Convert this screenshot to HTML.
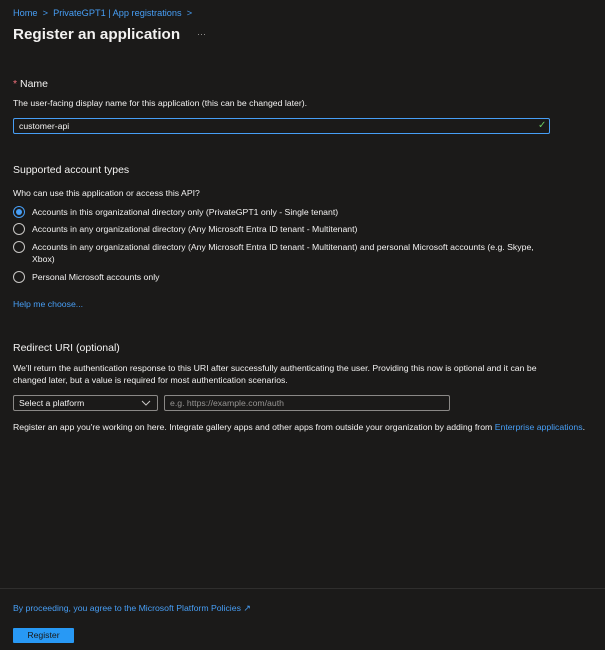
<!DOCTYPE html>
<html><head><meta charset="utf-8"><style>
*{margin:0;padding:0;box-sizing:border-box}
body{width:605px;height:650px;background:#1b1a19;color:#f3f2f1;font-family:"Liberation Sans",sans-serif;font-size:8.7px;position:relative;overflow:hidden}
.a{position:absolute;white-space:nowrap}
.link{color:#479ef5}
.radio{position:absolute;left:13px;width:12px;height:12px;border:1px solid #c8c6c4;border-radius:50%}
.radio.on{border-color:#479ef5}
.radio.on:after{content:"";position:absolute;left:2px;top:2px;width:6px;height:6px;border-radius:50%;background:#479ef5}
.box{position:absolute;border:1px solid #8a8886;border-radius:2px}
</style></head><body>
<div class="a link" style="left:13px;top:8px;font-size:9.2px">Home &nbsp;&gt;&nbsp; PrivateGPT1 | App registrations &nbsp;&gt;</div>
<div class="a" style="left:13px;top:26px;font-size:15.2px;font-weight:bold">Register an application</div>
<div class="a" style="left:197px;top:29px;color:#a19f9d;font-size:9px">···</div>
<div class="a" style="left:13px;top:78px;font-size:10.5px"><span style="color:#f1707b">*</span> Name</div>
<div class="a" style="left:13px;top:98px">The user-facing display name for this application (this can be changed later).</div>
<div class="box" style="left:13px;top:118px;width:537px;height:16px;border-color:#479ef5;border-width:1.5px"></div>
<div class="a" style="left:19px;top:121px">customer-api</div>
<div class="a" style="left:538px;top:120px;color:#6ccb5f;font-size:10px">✓</div>
<div class="a" style="left:13px;top:164px;font-size:10.5px">Supported account types</div>
<div class="a" style="left:13px;top:188px">Who can use this application or access this API?</div>
<div class="radio on" style="top:206px"></div>
<div class="a" style="left:32px;top:207px">Accounts in this organizational directory only (PrivateGPT1 only - Single tenant)</div>
<div class="radio" style="top:223px"></div>
<div class="a" style="left:32px;top:224px">Accounts in any organizational directory (Any Microsoft Entra ID tenant - Multitenant)</div>
<div class="radio" style="top:241px"></div>
<div class="a" style="left:32px;top:242px;line-height:11.5px">Accounts in any organizational directory (Any Microsoft Entra ID tenant - Multitenant) and personal Microsoft accounts (e.g. Skype,<br>Xbox)</div>
<div class="radio" style="top:271px"></div>
<div class="a" style="left:32px;top:272px">Personal Microsoft accounts only</div>
<div class="a link" style="left:13px;top:299px">Help me choose...</div>
<div class="a" style="left:13px;top:342px;font-size:10.5px">Redirect URI (optional)</div>
<div class="a" style="left:13px;top:362px;line-height:12px">We'll return the authentication response to this URI after successfully authenticating the user. Providing this now is optional and it can be<br>changed later, but a value is required for most authentication scenarios.</div>
<div class="box" style="left:13px;top:395px;width:145px;height:16px"></div>
<div class="a" style="left:19px;top:398px">Select a platform</div>
<svg class="a" style="left:141px;top:399px" width="10" height="8"><path d="M1 2 L5 6 L9 2" stroke="#c8c6c4" fill="none"/></svg>
<div class="box" style="left:164px;top:395px;width:286px;height:16px"></div>
<div class="a" style="left:170px;top:398px;color:#979593">e.g. https://example.com/auth</div>
<div class="a" style="left:13px;top:422px">Register an app you're working on here. Integrate gallery apps and other apps from outside your organization by adding from <span class="link">Enterprise applications</span>.</div>
<div style="position:absolute;left:0;top:588px;width:605px;height:1px;background:#2f2e2d"></div>
<div class="a link" style="left:13px;top:603px">By proceeding, you agree to the Microsoft Platform Policies <span style="font-size:9px">↗</span></div>
<div class="a" style="left:13px;top:628px;width:61px;height:15px;background:#2899f5;border-radius:1px;color:#1b1a19;text-align:center;line-height:15px">Register</div>
</body></html>
